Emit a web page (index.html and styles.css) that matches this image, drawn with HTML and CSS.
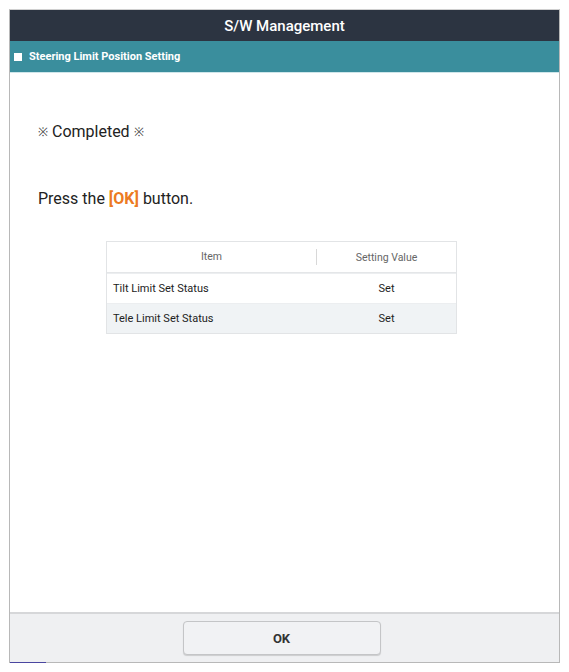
FILE: index.html
```html
<!DOCTYPE html>
<html lang="en">
<head>
  <meta charset="UTF-8">
  <meta name="viewport" content="width=device-width, initial-scale=1.0">
  <title>S/W Management</title>
  <link rel="stylesheet" href="styles.css">
</head>
<body>
  <div class="frame">
    <!-- Title bar -->
    <div class="title-bar">S/W Management</div>
    <div class="sub-bar"><span class="bullet"></span>Steering Limit Position Setting</div>

    <!-- Content -->
    <div class="content">
      <p class="status"><span class="mark">※</span> Completed <span class="mark">※</span></p>
      <p class="prompt">Press the <b class="ok-key">[OK]</b> button.</p>

      <div class="result-table">
        <div class="row head">
          <div class="cell name">Item</div>
          <div class="cell value">Setting Value</div>
        </div>
        <div class="row">
          <div class="cell name">Tilt Limit Set Status</div>
          <div class="cell value">Set</div>
        </div>
        <div class="row alt">
          <div class="cell name">Tele Limit Set Status</div>
          <div class="cell value">Set</div>
        </div>
      </div>
    </div>

    <!-- Footer -->
    <div class="footer">
      <button class="ok-btn">OK</button>
    </div>
  </div>
</body>
</html>
```

FILE: styles.css
```css
body {
  margin: 0;
  padding: 9px 0 0 9px;
  font-family: Roboto, 'Liberation Sans', sans-serif;
  background-color: white;
  color: #333;
}

.frame {
  width: 549px;
  height: 652px;
  border: 1px solid #b8b8b8;
  border-top-color: #d0d0d0;
  display: flex;
  flex-direction: column;
  position: relative;
}

.frame::after {
  content: "";
  position: absolute;
  left: 0;
  bottom: -1px;
  width: 36px;
  height: 1px;
  background-color: #4a46a0;
}

/* Title bars */
.title-bar {
  height: 31px;
  background-color: #2c3441;
  color: white;
  font-size: 15px;
  font-weight: 500;
  display: flex;
  align-items: center;
  justify-content: center;
}

.sub-bar {
  height: 31px;
  background-color: #3a8e9d;
  border-bottom: 1px solid #cfe6ea;
  color: white;
  font-size: 11px;
  font-weight: bold;
  display: flex;
  align-items: center;
  padding-left: 4px;
  gap: 7px;
}

.bullet {
  width: 8px;
  height: 8px;
  background-color: white;
}

/* Content */
.content {
  flex: 1;
  padding: 49px 0 0 28px;
}

.content p {
  margin: 0;
  font-size: 16px;
  line-height: 20px;
  color: #222;
}

.mark {
  font-size: 12px;
  line-height: 1;
  vertical-align: 1px;
  color: #444;
}

.prompt {
  margin-top: 47px !important;
}

.ok-key {
  color: #ec7a22;
}

.result-table {
  width: 349px;
  margin: 32px 0 0 68px;
  border: 1px solid #e2e4e6;
  font-size: 11px;
  color: #222;
}

.row {
  display: flex;
  height: 29px;
  align-items: center;
  border-top: 1px solid #eceef0;
}

.row.head {
  border-top: none;
  height: 30px;
  color: #666;
  border-bottom: 1px solid #e4e6e8;
}

.row.alt {
  background-color: #f0f3f5;
}

.cell.name {
  width: 210px;
  padding-left: 6px;
  box-sizing: border-box;
}

.cell.value {
  flex: 1;
  text-align: center;
}

.head .cell.name {
  text-align: center;
  border-right: 1px solid #d8d8d8;
  padding-left: 0;
  height: 16px;
  line-height: 16px;
}

.head .cell {
  font-size: 10.5px;
}

/* Footer */
.footer {
  height: 50px;
  border-top: 2px solid #d6d7d9;
  background-color: #eff0f2;
  display: flex;
  align-items: center;
  justify-content: center;
  box-sizing: border-box;
}

.ok-btn {
  width: 198px;
  height: 34px;
  margin-right: 6px;
  background-color: #f1f2f4;
  border: 1px solid #c4c5c7;
  border-radius: 4px;
  box-shadow: 0 1px 1px rgba(0, 0, 0, 0.15);
  font-family: Roboto, 'Liberation Sans', sans-serif;
  font-size: 13px;
  font-weight: bold;
  color: #333;
}
```
